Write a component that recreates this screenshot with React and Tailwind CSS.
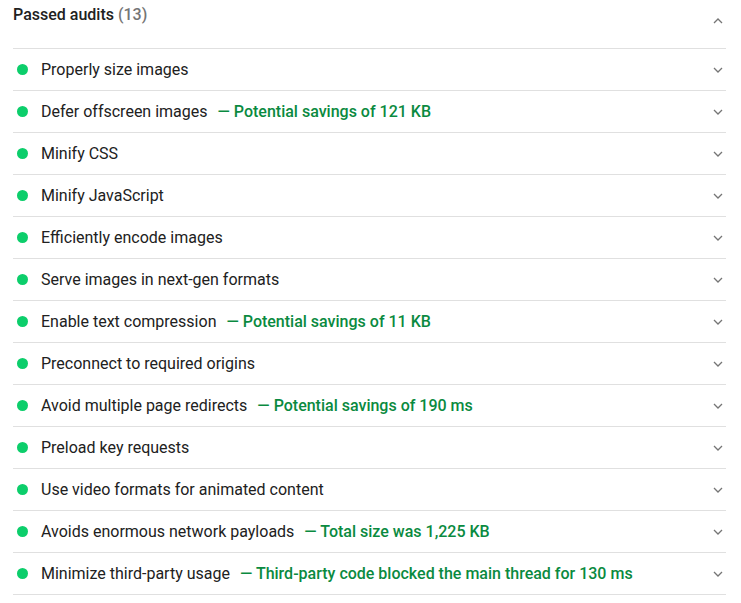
const audits = [
  { title: 'Properly size images' },
  { title: 'Defer offscreen images', note: 'Potential savings of 121 KB' },
  { title: 'Minify CSS' },
  { title: 'Minify JavaScript' },
  { title: 'Efficiently encode images' },
  { title: 'Serve images in next-gen formats' },
  { title: 'Enable text compression', note: 'Potential savings of 11 KB' },
  { title: 'Preconnect to required origins' },
  { title: 'Avoid multiple page redirects', note: 'Potential savings of 190 ms' },
  { title: 'Preload key requests' },
  { title: 'Use video formats for animated content' },
  { title: 'Avoids enormous network payloads', note: 'Total size was 1,225 KB' },
  { title: 'Minimize third-party usage', note: 'Third-party code blocked the main thread for 130 ms' },
]

const Chevron = ({ up }) => (
  <svg width="10" height="6" viewBox="0 0 10 6" className={up ? 'rotate-180' : ''}>
    <path d="M1 1l4 4 4-4" fill="none" stroke="#757575" strokeWidth="1.3" />
  </svg>
)

export default function App() {
  return (
    <div className="min-h-screen bg-white pl-[13px] pr-[15px] text-[16px] text-[#212121]" style={{ fontFamily: 'Roboto, "Liberation Sans", sans-serif' }}>
      <div className="flex h-[49px] items-start justify-between border-b border-[#e0e0e0] pt-[4px]">
        <div className="font-medium leading-[22px]">
          Passed audits <span className="text-[#757575]">(13)</span>
        </div>
        <div className="mr-[3px] mt-[14px]">
          <Chevron up />
        </div>
      </div>
      {audits.map((audit) => (
        <div key={audit.title} className="flex h-[42px] items-center border-b border-[#e0e0e0]">
          <span className="ml-[4px] mr-[13px] h-[11px] w-[11px] rounded-full bg-[#0cce6b]" />
          <span>{audit.title}</span>
          {audit.note ? (
            <span className="ml-[10px] font-medium text-[#0a8a40]">— {audit.note}</span>
          ) : null}
          <span className="ml-auto mr-[3px]">
            <Chevron />
          </span>
        </div>
      ))}
    </div>
  )
}
